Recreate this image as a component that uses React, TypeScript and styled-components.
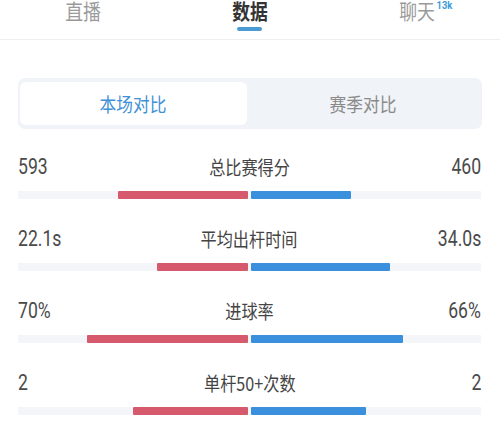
import React from "react";
import styled, { createGlobalStyle, css } from "styled-components";

const Global = createGlobalStyle`
  html, body { margin: 0; padding: 0; background: #ffffff; }
  body { width: 500px; font-family: "Noto Sans CJK SC", "Noto Sans", sans-serif; }
`;

const squeeze = (origin: string, k = 0.85) => css`
  display: inline-block;
  transform: scaleX(${k});
  transform-origin: ${origin};
`;

const Page = styled.div`
  width: 500px;
  height: 440px;
  overflow: hidden;
  background: #fff;
`;

const Header = styled.div`
  display: grid;
  grid-template-columns: repeat(3, 1fr);
  height: 39px;
  border-bottom: 1px solid #eeeeee;
`;

const Tab = styled.div`
  display: flex;
  flex-direction: column;
  align-items: center;
`;

const TabLabel = styled.div<{ $active?: boolean }>`
  position: relative;
  font-size: 21px;
  line-height: 22px;
  height: 22px;
  margin-top: -1px;
  color: ${(p) => (p.$active ? "#333333" : "#9a9a9a")};
  font-weight: ${(p) => (p.$active ? 700 : 400)};
  ${squeeze("center")}
`;

const Badge = styled.span`
  position: absolute;
  left: 44px;
  top: 1px;
  font-size: 11px;
  line-height: 11px;
  font-weight: 700;
  color: #3d9ad8;
  font-family: "Roboto", sans-serif;
`;

const Underline = styled.div<{ $show?: boolean }>`
  margin-top: 6px;
  width: 25px;
  height: 4px;
  border-radius: 2px;
  background: ${(p) => (p.$show ? "#4a9bd4" : "transparent")};
`;

const Segmented = styled.div`
  margin: 38px 18px 0 18px;
  height: 51px;
  box-sizing: border-box;
  padding: 4px 2px;
  border-radius: 7px;
  background: #f0f3f8;
  display: grid;
  grid-template-columns: 227px 1fr;
`;

const Segment = styled.div<{ $active?: boolean }>`
  display: flex;
  align-items: center;
  justify-content: center;
  border-radius: 6px;
  background: ${(p) => (p.$active ? "#ffffff" : "transparent")};
`;

const SegmentText = styled.span<{ $active?: boolean }>`
  font-size: 19px;
  line-height: 24px;
  color: ${(p) => (p.$active ? "#3f90d6" : "#8a8a8a")};
  ${squeeze("center", 0.88)}
`;

const Stats = styled.div`
  margin-top: 26px;
  padding: 0 19px 0 18px;
  display: flex;
  flex-direction: column;
  gap: 28px;
`;

const StatRow = styled.div`
  display: flex;
  flex-direction: column;
  gap: 12px;
`;

const LabelLine = styled.div`
  display: grid;
  grid-template-columns: 1fr auto 1fr;
  align-items: center;
  height: 24px;
  line-height: 24px;
`;

const Num = styled.span<{ $right?: boolean }>`
  font-family: "Roboto", "Noto Sans", sans-serif;
  font-size: 22px;
  color: #4a4a4a;
  text-align: ${(p) => (p.$right ? "right" : "left")};
`;

const NumText = styled.span<{ $right?: boolean }>`
  ${(p) => squeeze(p.$right ? "right" : "left", 0.8)}
`;

const Title = styled.span`
  font-size: 19px;
  text-align: center;
  color: #444;
  ${squeeze("center")}
`;

const Track = styled.div`
  display: grid;
  grid-template-columns: 1fr 1fr;
  column-gap: 3px;
  height: 8px;
  background: #f3f5f9;
`;

const Half = styled.div<{ $right?: boolean }>`
  display: flex;
  justify-content: ${(p) => (p.$right ? "flex-start" : "flex-end")};
`;

const Bar = styled.div<{ $color: string }>`
  height: 8px;
  border-radius: 1px;
  background: ${(p) => p.$color};
`;

type Stat = { title: string; left: string; right: string; lw: number; rw: number };

const stats: Stat[] = [
  { title: "总比赛得分", left: "593", right: "460", lw: 593 / 1053, rw: 460 / 1053 },
  { title: "平均出杆时间", left: "22.1s", right: "34.0s", lw: 22.1 / 56.1, rw: 34 / 56.1 },
  { title: "进球率", left: "70%", right: "66%", lw: 0.7, rw: 0.66 },
  { title: "单杆50+次数", left: "2", right: "2", lw: 0.5, rw: 0.5 },
];

export default function App() {
  return (
    <Page>
      <Global />
      <Header>
        <Tab>
          <TabLabel>直播</TabLabel>
          <Underline />
        </Tab>
        <Tab>
          <TabLabel $active>数据</TabLabel>
          <Underline $show />
        </Tab>
        <Tab>
          <TabLabel>
            聊天<Badge>13k</Badge>
          </TabLabel>
          <Underline />
        </Tab>
      </Header>
      <Segmented>
        <Segment $active>
          <SegmentText $active>本场对比</SegmentText>
        </Segment>
        <Segment>
          <SegmentText>赛季对比</SegmentText>
        </Segment>
      </Segmented>
      <Stats>
        {stats.map((s) => (
          <StatRow key={s.title}>
            <LabelLine>
              <Num>
                <NumText>{s.left}</NumText>
              </Num>
              <Title>{s.title}</Title>
              <Num $right>
                <NumText $right>{s.right}</NumText>
              </Num>
            </LabelLine>
            <Track>
              <Half>
                <Bar $color="#d6596d" style={{ width: `${s.lw * 100}%` }} />
              </Half>
              <Half $right>
                <Bar $color="#3a90dc" style={{ width: `${s.rw * 100}%` }} />
              </Half>
            </Track>
          </StatRow>
        ))}
      </Stats>
    </Page>
  );
}
